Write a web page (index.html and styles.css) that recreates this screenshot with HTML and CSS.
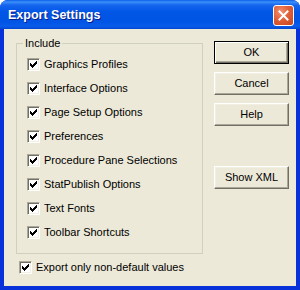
FILE: index.html
```html
<!DOCTYPE html>
<html>
<head>
<meta charset="utf-8">
<link rel="stylesheet" href="styles.css">
</head>
<body>
<div class="window">
  <div class="titlebar">
    <span class="title">Export Settings</span>
    <span class="close"><svg width="11" height="11" viewBox="0 0 11 11"><path d="M1.5 1.5 L9.5 9.5 M9.5 1.5 L1.5 9.5" stroke="#fff" stroke-width="2" stroke-linecap="square"/></svg></span>
  </div>
  <div class="client">
    <div class="left">
      <fieldset class="group">
        <legend>Include</legend>
        <div class="rows">
          <label class="check"><span class="box"><svg width="13" height="13" viewBox="0 0 13 13"><path d="M3 5 V8 L5 10 L10 5 V2 L5 7 Z" fill="#000" shape-rendering="crispEdges"/></svg></span>Graphics Profiles</label>
          <label class="check"><span class="box"><svg width="13" height="13" viewBox="0 0 13 13"><path d="M3 5 V8 L5 10 L10 5 V2 L5 7 Z" fill="#000" shape-rendering="crispEdges"/></svg></span>Interface Options</label>
          <label class="check"><span class="box"><svg width="13" height="13" viewBox="0 0 13 13"><path d="M3 5 V8 L5 10 L10 5 V2 L5 7 Z" fill="#000" shape-rendering="crispEdges"/></svg></span>Page Setup Options</label>
          <label class="check"><span class="box"><svg width="13" height="13" viewBox="0 0 13 13"><path d="M3 5 V8 L5 10 L10 5 V2 L5 7 Z" fill="#000" shape-rendering="crispEdges"/></svg></span>Preferences</label>
          <label class="check"><span class="box"><svg width="13" height="13" viewBox="0 0 13 13"><path d="M3 5 V8 L5 10 L10 5 V2 L5 7 Z" fill="#000" shape-rendering="crispEdges"/></svg></span>Procedure Pane Selections</label>
          <label class="check"><span class="box"><svg width="13" height="13" viewBox="0 0 13 13"><path d="M3 5 V8 L5 10 L10 5 V2 L5 7 Z" fill="#000" shape-rendering="crispEdges"/></svg></span>StatPublish Options</label>
          <label class="check"><span class="box"><svg width="13" height="13" viewBox="0 0 13 13"><path d="M3 5 V8 L5 10 L10 5 V2 L5 7 Z" fill="#000" shape-rendering="crispEdges"/></svg></span>Text Fonts</label>
          <label class="check"><span class="box"><svg width="13" height="13" viewBox="0 0 13 13"><path d="M3 5 V8 L5 10 L10 5 V2 L5 7 Z" fill="#000" shape-rendering="crispEdges"/></svg></span>Toolbar Shortcuts</label>
        </div>
      </fieldset>
      <label class="check bottom"><span class="box"><svg width="13" height="13" viewBox="0 0 13 13"><path d="M3 5 V8 L5 10 L10 5 V2 L5 7 Z" fill="#000" shape-rendering="crispEdges"/></svg></span>Export only non-default values</label>
    </div>
    <div class="buttons">
      <div class="btn default"><span class="inner">OK</span></div>
      <div class="btn"><span class="inner">Cancel</span></div>
      <div class="btn"><span class="inner">Help</span></div>
      <div class="btn xml"><span class="inner">Show XML</span></div>
    </div>
  </div>
</div>
</body>
</html>
```
FILE: styles.css
```css
html, body {
  margin: 0;
  padding: 0;
  background: #ffffff;
}
.window {
  width: 300px;
  height: 290px;
  display: flex;
  flex-direction: column;
  background: #0831D9;
  border-radius: 8px 8px 0 0;
  overflow: hidden;
  font-family: "Liberation Sans", Arial, sans-serif;
  font-size: 11px;
  color: #000;
}
.titlebar {
  height: 29px;
  flex: none;
  display: flex;
  align-items: center;
  justify-content: space-between;
  padding: 0 6px 0 8px;
  background: linear-gradient(#0A5FE8 0px, #3D8FF9 2px, #1565EE 5px, #0256E6 12px, #0055E5 22px, #0A5CEB 26px, #0347D0 29px);
}
.title {
  color: #fff;
  font-weight: bold;
  font-size: 12.5px;
  text-shadow: 1px 1px #0A1C8A;
  padding-top: 1px;
}
.close {
  width: 19px;
  height: 19px;
  border: 1px solid #fff;
  border-radius: 3px;
  background: radial-gradient(circle at 35% 30%, #F09070 0, #E0603A 45%, #C4441C 100%);
  display: flex;
  align-items: center;
  justify-content: center;
  margin-top: 1px;
}
.client {
  flex: 1;
  margin: 0 4px 4px 4px;
  background: #ECE9D8;
  display: flex;
  align-items: flex-start;
}
.left {
  margin-left: 12px;
  margin-top: 8px;
  display: flex;
  flex-direction: column;
}
.group {
  width: 175px;
  margin: 0;
  padding: 8px 0 14px 10px;
  border: 1px solid #D0D0BF;
  box-sizing: content-box;
  min-width: 0;
}
.group legend {
  padding: 0 2px;
  margin-left: -4px;
  line-height: 13px;
  height: 13px;
}
.rows {
  display: flex;
  flex-direction: column;
  gap: 11px;
}
.check {
  display: flex;
  align-items: center;
  gap: 4px;
  height: 13px;
  line-height: 13px;
  white-space: nowrap;
}
.box {
  width: 13px;
  height: 13px;
  box-sizing: border-box;
  flex: none;
  position: relative;
  background: #fff;
  border: 1px solid;
  border-color: #ACA899 #fff #fff #ACA899;
  box-shadow: inset 1px 1px #716F64, inset -1px -1px #F1EFE2;
}
.box svg {
  position: absolute;
  left: -1px;
  top: -1px;
}
.bottom {
  margin-top: 7px;
  margin-left: 3px;
}
.buttons {
  margin-left: 11px;
  margin-top: 12px;
  display: flex;
  flex-direction: column;
  gap: 8px;
}
.btn {
  width: 75px;
  height: 23px;
  box-sizing: border-box;
  border: 1px solid;
  border-color: #fff #716F64 #716F64 #fff;
  box-shadow: inset -1px -1px #ACA899, inset 1px 1px #F1EFE2;
  display: flex;
  align-items: center;
  justify-content: center;
  background: #ECE9D8;
}
.btn .inner {
  line-height: 13px;
}
.btn.default {
  border: 1px solid #000;
  box-shadow: inset 1px 1px #fff, inset -1px -1px #716F64, inset -2px -2px #ACA899;
}
.btn.xml {
  margin-top: 32px;
}
```
